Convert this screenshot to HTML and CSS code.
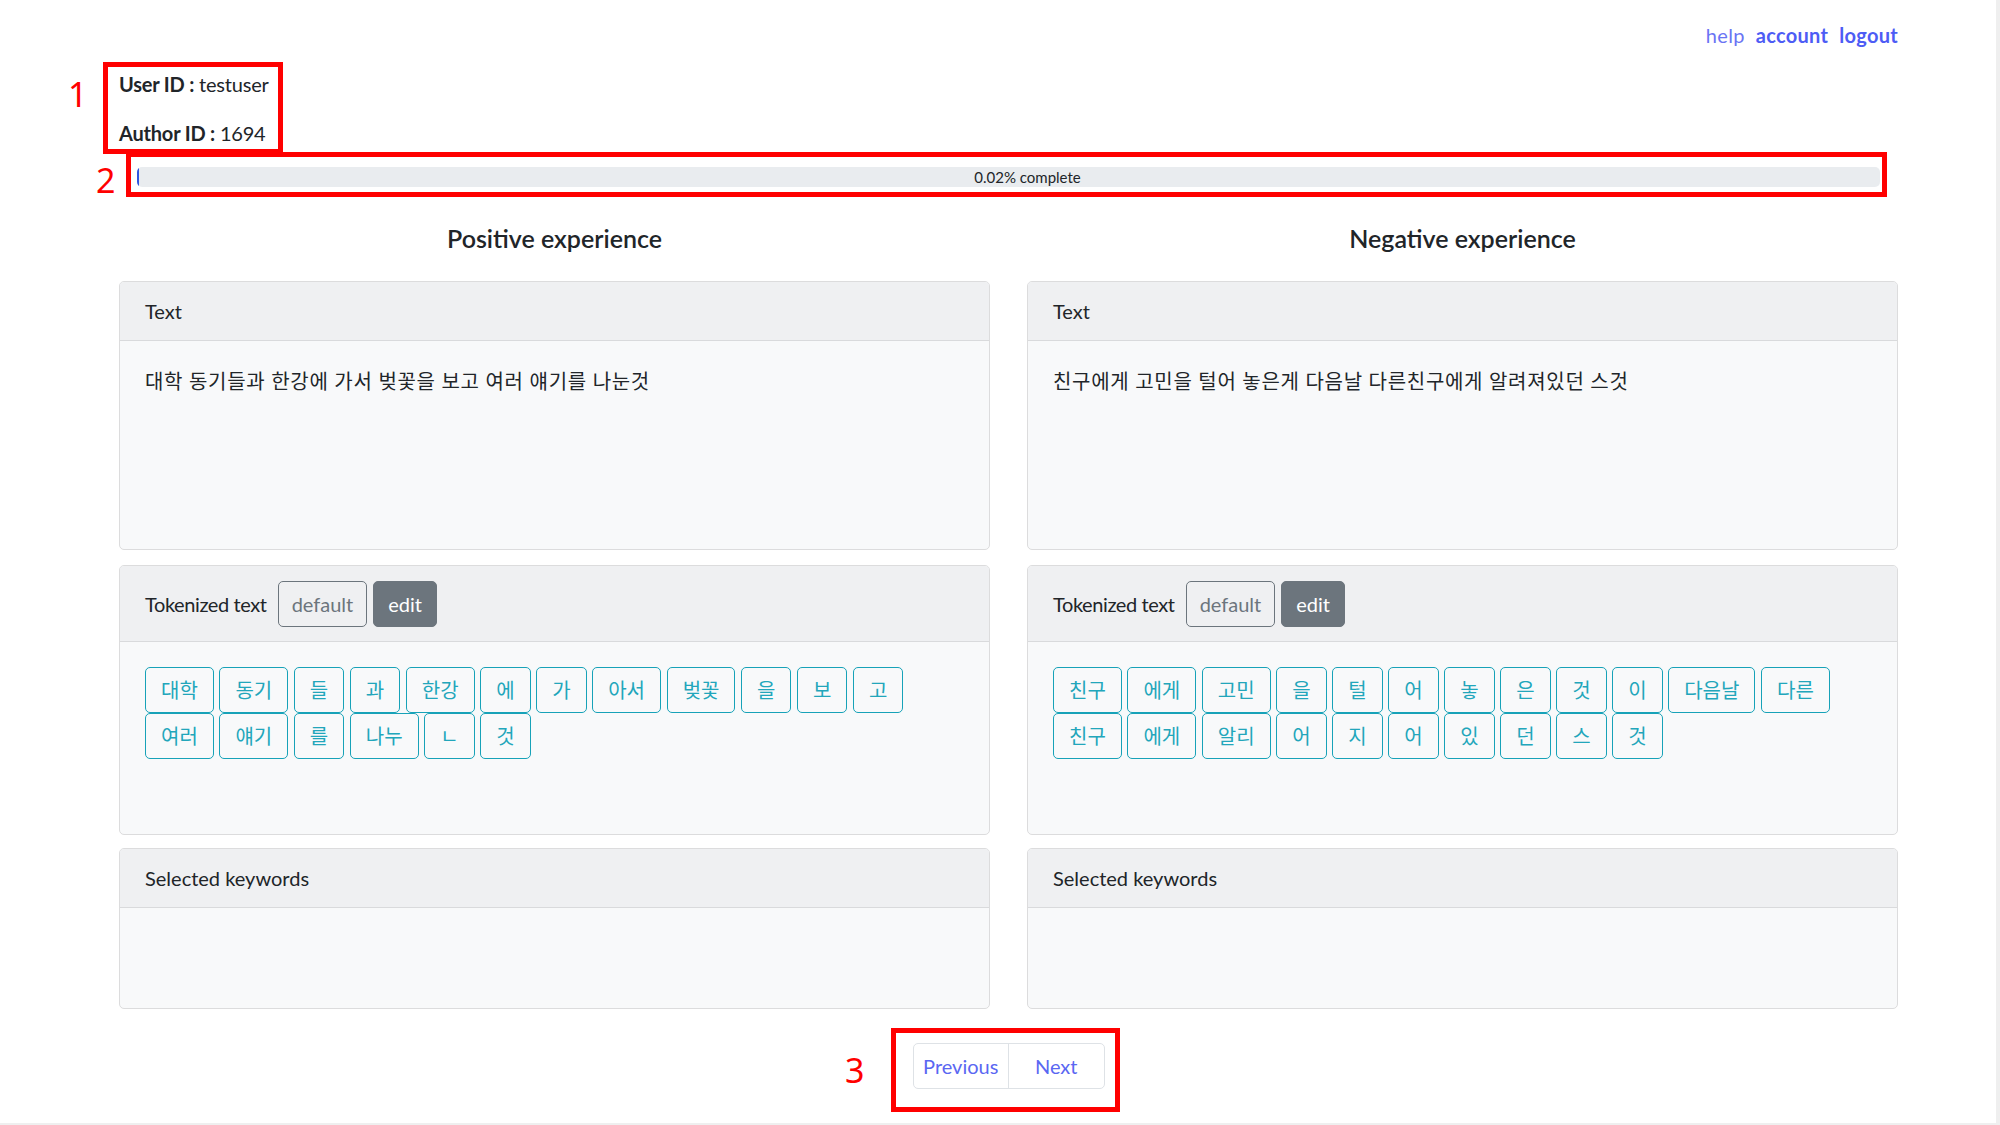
FILE: index.html
```html
<!DOCTYPE html>
<html lang="ko">
<head>
<meta charset="utf-8">
<title>Keyword selection</title>
<link rel="stylesheet" href="styles.css">
</head>
<body>
<div class="page">
  <nav class="topnav">
    <a class="navlink help" href="#">help</a>
    <a class="navlink strong" href="#">account</a>
    <a class="navlink strong" href="#">logout</a>
  </nav>

  <div class="ids">
    <p><b>User ID :</b> testuser</p>
    <p><b>Author ID :</b> 1694</p>
  </div>

  <div class="progress">
    <span class="progress-label">0.02% complete</span>
  </div>

  <div class="columns">
    <section class="col">
      <h5 class="col-title">Positive experience</h5>
      <div class="card card-text">
        <div class="card-header">Text</div>
        <div class="card-body body-text">대학 동기들과 한강에 가서 벚꽃을 보고 여러 얘기를 나눈것</div>
      </div>
      <div class="card card-tokens">
        <div class="card-header header-tools">
          <span class="tools-label">Tokenized text</span>
          <button class="btn btn-outline">default</button>
          <button class="btn btn-dark">edit</button>
        </div>
        <div class="card-body body-tokens">
          <div class="tokens">
            <button class="token">대학</button><button class="token">동기</button><button class="token">들</button><button class="token">과</button><button class="token">한강</button><button class="token">에</button><button class="token">가</button><button class="token">아서</button><button class="token">벚꽃</button><button class="token">을</button><button class="token">보</button><button class="token">고</button><button class="token">여러</button><button class="token">얘기</button><button class="token">를</button><button class="token">나누</button><button class="token">ㄴ</button><button class="token">것</button>
          </div>
        </div>
      </div>
      <div class="card card-keywords">
        <div class="card-header">Selected keywords</div>
        <div class="card-body body-keywords"></div>
      </div>
    </section>

    <section class="col">
      <h5 class="col-title">Negative experience</h5>
      <div class="card card-text">
        <div class="card-header">Text</div>
        <div class="card-body body-text">친구에게 고민을 털어 놓은게 다음날 다른친구에게 알려져있던 스것</div>
      </div>
      <div class="card card-tokens">
        <div class="card-header header-tools">
          <span class="tools-label">Tokenized text</span>
          <button class="btn btn-outline">default</button>
          <button class="btn btn-dark">edit</button>
        </div>
        <div class="card-body body-tokens">
          <div class="tokens">
            <button class="token">친구</button><button class="token">에게</button><button class="token">고민</button><button class="token">을</button><button class="token">털</button><button class="token">어</button><button class="token">놓</button><button class="token">은</button><button class="token">것</button><button class="token">이</button><button class="token">다음날</button><button class="token">다른</button><button class="token">친구</button><button class="token">에게</button><button class="token">알리</button><button class="token">어</button><button class="token">지</button><button class="token">어</button><button class="token">있</button><button class="token">던</button><button class="token">스</button><button class="token">것</button>
          </div>
        </div>
      </div>
      <div class="card card-keywords">
        <div class="card-header">Selected keywords</div>
        <div class="card-body body-keywords"></div>
      </div>
    </section>
  </div>

  <nav class="pager">
    <a class="page-link" href="#">Previous</a>
    <a class="page-link" href="#">Next</a>
  </nav>
</div>

<div class="annot annot-box box1"></div>
<div class="annot annot-box box2"></div>
<div class="annot annot-box box3"></div>
<div class="annot annot-num num1">1</div>
<div class="annot annot-num num2">2</div>
<div class="annot annot-num num3">3</div>
<div class="edge-right"></div>
<div class="edge-bottom"></div>
</body>
</html>
```

FILE: styles.css
```css
html, body {
  margin: 0;
  padding: 0;
}

body {
  font-family: "Lato", "Noto Sans CJK KR", sans-serif;
  font-size: 20px;
  line-height: 30px;
  color: #212529;
  background: #ffffff;
  width: 2000px;
  height: 1125px;
  overflow: hidden;
  position: relative;
}

.page {
  margin-left: 119px;
  width: 1779px;
}

/* top navigation */
.topnav {
  display: flex;
  justify-content: flex-end;
  gap: 11px;
  padding-top: 20px;
  height: 30px;
}

.navlink {
  color: #4d5cf5;
  text-decoration: none;
  letter-spacing: 0.3px;
}

.navlink.help {
  color: #6a74f4;
}

.navlink.strong {
  font-weight: 700;
}

/* ids */
.ids {
  padding-top: 19px;
}

.ids p {
  margin: 0 0 19px;
  letter-spacing: -0.2px;
}

.ids p:last-child {
  margin-bottom: 0;
}

/* progress */
.progress {
  margin: 19px 18px 0;
  height: 20px;
  border-radius: 5px;
  background: linear-gradient(to right, #2f55e0 0, #2f55e0 2px, #e9ecef 2px);
  display: flex;
  justify-content: center;
  align-items: center;
}

.progress-label {
  font-size: 15px;
  line-height: 20px;
  padding-left: 38px;
}

/* columns */
.columns {
  display: grid;
  grid-template-columns: 1fr 1fr;
  column-gap: 37px;
  margin-top: 36px;
}

.col {
  display: flex;
  flex-direction: column;
}

.col-title {
  margin: 0 0 28px;
  text-align: center;
  font-size: 25px;
  line-height: 30px;
  font-weight: 600;
}

/* cards */
.card {
  border: 1px solid #dcdcdd;
  border-radius: 5px;
  background: #f8f9fa;
  overflow: hidden;
}

.card-tokens {
  margin-top: 15px;
}

.card-keywords {
  margin-top: 13px;
}

.card-header {
  height: 59px;
  box-sizing: border-box;
  padding: 0 25px;
  display: flex;
  align-items: center;
  background: #eff0f2;
  border-bottom: 1px solid #d9dadc;
}

.header-tools {
  height: 76px;
}

.tools-label {
  margin-right: 11px;
  letter-spacing: -0.4px;
}

.card-body {
  box-sizing: border-box;
  padding: 25px;
}

.body-text {
  height: 208px;
  letter-spacing: 0.7px;
}

.body-tokens {
  height: 192px;
}

.body-keywords {
  height: 100px;
}

/* buttons */
.btn {
  font-family: inherit;
  font-size: 20px;
  line-height: 30px;
  height: 46px;
  padding: 0 13px;
  border-radius: 5px;
  box-sizing: border-box;
}

.btn-outline {
  background: transparent;
  border: 1px solid #6c757d;
  color: #6c757d;
}

.btn-dark {
  margin-left: 6px;
  padding: 0 14px;
  background: #6c757d;
  border: 1px solid #6c757d;
  color: #ffffff;
}

.tokens {
  display: flex;
  flex-wrap: wrap;
  column-gap: 5.6px;
}

.token {
  font-family: inherit;
  font-size: 20px;
  line-height: 30px;
  height: 46px;
  padding: 0 15px;
  box-sizing: border-box;
  background: transparent;
  border: 1px solid #17a2b8;
  border-radius: 5px;
  color: #22a6bb;
}

/* pager */
.pager {
  margin: 34px auto 0;
  display: flex;
  width: 192px;
  height: 46px;
  box-sizing: border-box;
  border: 1px solid #dee2e6;
  border-radius: 5px;
}

.page-link {
  flex: 1;
  display: flex;
  align-items: center;
  justify-content: center;
  color: #5a67f2;
  text-decoration: none;
}

.page-link + .page-link {
  border-left: 1px solid #dee2e6;
}

/* annotations over the screenshot */
.annot {
  position: absolute;
}

.annot-box {
  border: 5px solid #ff0000;
  box-sizing: border-box;
}

.box1 { left: 103px; top: 62px; width: 180px; height: 92px; }
.box2 { left: 126px; top: 152px; width: 1761px; height: 45px; }
.box3 { left: 891px; top: 1028px; width: 229px; height: 84px; }

.annot-num {
  font-family: "Noto Sans", sans-serif;
  font-size: 34px;
  line-height: 34px;
  color: #ff0000;
}

.num1 { left: 68px; top: 77px; }
.num2 { left: 96px; top: 163px; }
.num3 { left: 845px; top: 1053px; }

.edge-right {
  position: absolute;
  right: 0;
  top: 0;
  width: 4px;
  height: 1125px;
  background: #efefef;
}

.edge-bottom {
  position: absolute;
  left: 0;
  bottom: 0;
  width: 2000px;
  height: 2px;
  background: #efefef;
}
```
